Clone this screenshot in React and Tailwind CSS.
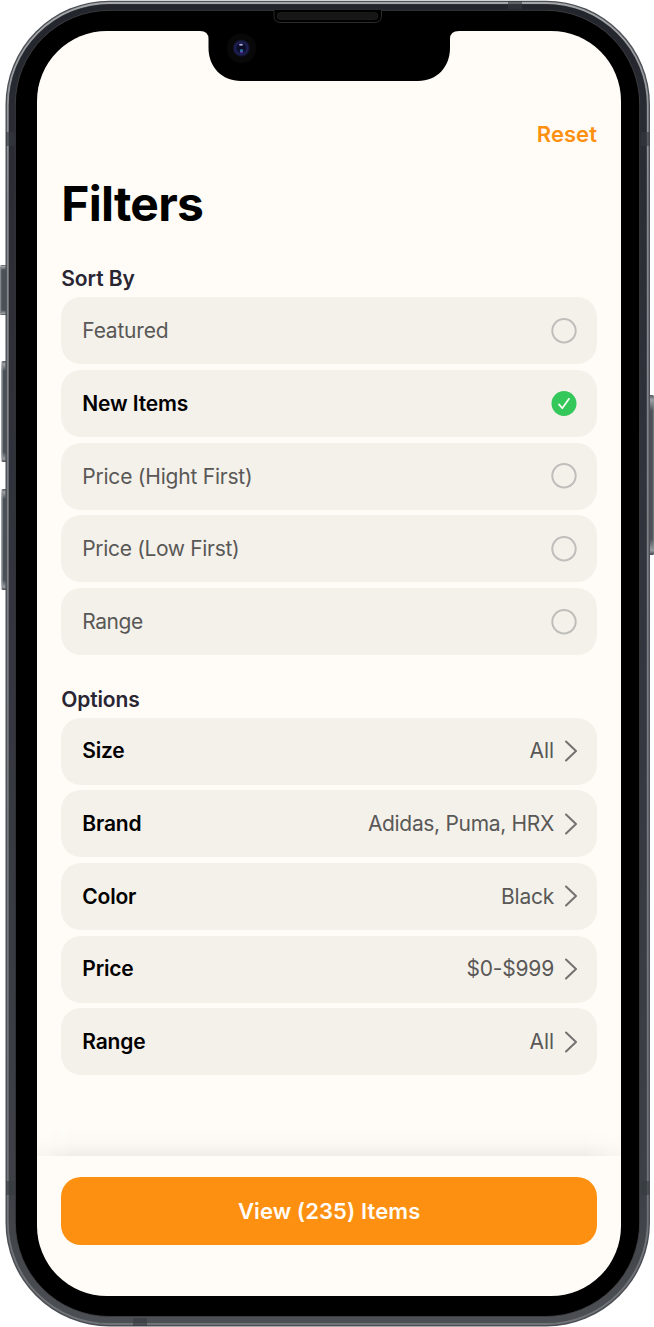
import React from "react";

const sortOptions = [
  { label: "Featured", track: "tracking-[-0.22px]" },
  { label: "New Items", selected: true, track: "tracking-[-0.14px]" },
  { label: "Price (Hight First)", track: "tracking-[-0.22px]" },
  { label: "Price (Low First)", track: "tracking-[-0.34px]" },
  { label: "Range", track: "tracking-[-0.45px]" },
];

const filterOptions = [
  { label: "Size", value: "All", track: "tracking-[-0.1px]" },
  { label: "Brand", value: "Adidas, Puma, HRX", track: "tracking-[-0.32px]" },
  { label: "Color", value: "Black", track: "tracking-[-0.25px]" },
  { label: "Price", value: "$0-$999", track: "tracking-[-0.2px]" },
  { label: "Range", value: "All", track: "tracking-[-0.1px]" },
];

function DeviceFrame() {
  return (
    <svg className="pointer-events-none absolute inset-0" width="654" height="1327" viewBox="0 0 654 1327" fill="none" aria-hidden="true">
      <defs>
        <linearGradient id="shell" x1="0" y1="0" x2="0" y2="1">
          <stop offset="0" stopColor="#22252b" />
          <stop offset="0.1" stopColor="#292c33" />
          <stop offset="0.5" stopColor="#33363e" />
          <stop offset="0.9" stopColor="#3d4147" />
          <stop offset="1" stopColor="#4c5054" />
        </linearGradient>
        <linearGradient id="rim" x1="0" y1="0" x2="0" y2="1">
          <stop offset="0" stopColor="#a4a7a8" />
          <stop offset="0.15" stopColor="#85888d" />
          <stop offset="0.85" stopColor="#6f7378" />
          <stop offset="1" stopColor="#707477" />
        </linearGradient>
        <linearGradient id="key" x1="0" y1="0" x2="0" y2="1">
          <stop offset="0" stopColor="#555a60" />
          <stop offset="0.03" stopColor="#a0a4a8" />
          <stop offset="0.1" stopColor="#4b5157" />
          <stop offset="0.9" stopColor="#4b5157" />
          <stop offset="0.97" stopColor="#999da1" />
          <stop offset="1" stopColor="#44494f" />
        </linearGradient>
        <pattern id="mesh" width="2" height="2" patternUnits="userSpaceOnUse">
          <rect width="2" height="2" fill="#111" />
          <rect width="1" height="1" fill="#1c1c1c" />
          <rect x="1" y="1" width="1" height="1" fill="#1c1c1c" />
        </pattern>
      </defs>
      <rect x="0" y="265" width="8" height="50" rx="1.5" fill="url(#key)" />
      <rect x="1.5" y="361" width="7" height="101" rx="1.5" fill="url(#key)" />
      <rect x="1.5" y="489" width="7" height="101" rx="1.5" fill="url(#key)" />
      <rect x="647" y="395" width="7" height="160" rx="1.5" fill="url(#key)" />
      <g stroke="#8f9499" strokeWidth="1">
        <path d="M0.700 268V312M2.200 364V459M2.200 492V587" />
        <path d="M653.300 398V552" strokeOpacity="0.7" />
      </g>
      <rect x="5.5" y="0.7" width="644.5" height="1325.8" rx="104" fill="#4b4f55" />
      <rect x="7.8" y="3" width="639.9" height="1321" rx="101.700" stroke="url(#rim)" strokeWidth="1.8" />
      <rect x="8.900" y="4.200" width="637.700" height="1318.400" rx="100.500" fill="url(#shell)" />
      <rect x="15.3" y="10.3" width="624.4" height="1306.2" rx="94" fill="#000" stroke="#3f4043" strokeWidth="0.9" />
      <g fill="#353a40" fillOpacity="0.6">
        <rect x="6" y="132" width="8.500" height="14" />
        <rect x="641" y="132" width="8.500" height="14" />
        <rect x="6" y="1181" width="8.500" height="14" />
        <rect x="641" y="1181" width="8.500" height="14" />
        <rect x="508" y="1" width="14" height="8" />
        <rect x="133" y="1318" width="14" height="8" />
      </g>
      <path d="M274 10V16Q274 22.5 281 22.5H374Q381.500 22.5 381.500 16V10" fill="#000" stroke="#2a2a2a" />
      <rect x="277" y="12.5" width="101" height="7" rx="3.5" fill="url(#mesh)" stroke="#202020" strokeWidth="0.7" />
    </svg>
  );
}

function Notch() {
  return (
    <svg className="absolute left-[200px] top-[30px]" width="260" height="52" viewBox="200 30 260 52" aria-hidden="true">
      <defs>
        <radialGradient id="lens">
          <stop offset="0" stopColor="#080a1c" />
          <stop offset="0.45" stopColor="#0c0e2c" />
          <stop offset="0.7" stopColor="#1f2158" />
          <stop offset="1" stopColor="#08080a" />
        </radialGradient>
      </defs>
      <path d="M200 29V31Q208.500 31 208.500 39V48C208.500 67 222 81 241 81H418C437 81 450 67 450 48V39Q450 31 459 31V29Z" fill="#000" />
      <circle cx="241.500" cy="48.300" r="14.800" fill="#080808" />
      <circle cx="241.300" cy="48.200" r="9" fill="url(#lens)" />
      <ellipse cx="241" cy="44.700" rx="2" ry="1" fill="#a9a7d8" />
      <circle cx="241.500" cy="50.800" r="1.700" fill="#326da7" />
      <ellipse cx="241.500" cy="52.500" rx="1.500" ry="0.700" fill="#6523a0" />
    </svg>
  );
}

function Radio({ selected }) {
  return (
    <svg className="h-[26px] w-[27px] shrink-0" viewBox="-1 0 27 26" fill="none" aria-hidden="true">
      {selected ? (
        <>
          <circle cx="13" cy="12.500" r="12.500" fill="#34c759" />
          <path d="M8 13.400L11.300 17.300L18 7.800" stroke="#fffdf8" strokeWidth="1.700" strokeLinecap="round" strokeLinejoin="round" />
        </>
      ) : (
        <circle cx="13" cy="12.800" r="11.700" stroke="#bfbebb" strokeWidth="2" />
      )}
    </svg>
  );
}

function Chevron() {
  return (
    <svg className="ml-[11px] h-[22px] w-3 shrink-0" viewBox="0 0 12 22" fill="none" aria-hidden="true">
      <path d="M1 1.500L11 11L1 20.500" stroke="#737270" strokeWidth="2" strokeLinecap="round" strokeLinejoin="round" />
    </svg>
  );
}

const rowClass = "flex h-[67px] w-full items-center rounded-[20px] bg-[#f4f1eb] pl-[21px] pr-5 text-left";

export default function App() {
  return (
    <div className="relative h-[1327px] w-[654px] overflow-hidden bg-white font-['Inter',sans-serif] text-[21px] leading-[26px] text-black">
      <DeviceFrame />
      <div className="relative pl-[37.300px] pt-[30.700px]">
        <main className="flex h-[1265.300px] w-[583.700px] flex-col overflow-hidden rounded-[70px] bg-[#fffcf7]">
          <div className="flex-1 px-6 pt-[90px]">
            <header>
              <div className="flex justify-end">
                <button className="text-[22px] font-semibold tracking-[0.05px] text-[#fc9010]">Reset</button>
              </div>
              <h1 className="mt-[27px] text-[48px] font-bold leading-[60px] tracking-[-0.75px]">Filters</h1>
            </header>
            <section className="mt-[32.500px]">
              <h2 className="mb-[5.200px] font-semibold tracking-[-0.1px] text-[#292533]">Sort By</h2>
              <div className="flex flex-col gap-[5.700px]">
                {sortOptions.map((o) => (
                  <button key={o.label} className={rowClass}>
                    <span className={"flex-1 pt-[0.500px] " + o.track + (o.selected ? " font-semibold text-black" : " text-[#595856]")}>{o.label}</span>
                    <Radio selected={o.selected} />
                  </button>
                ))}
              </div>
            </section>
            <section className="mt-[31.600px]">
              <h2 className="mb-[4.800px] font-semibold tracking-[-0.15px] text-[#292533]">Options</h2>
              <div className="flex flex-col gap-[5.700px]">
                {filterOptions.map((o) => (
                  <button key={o.label} className={rowClass}>
                    <span className="flex-1 pt-[0.800px] font-semibold tracking-[-0.2px]">{o.label}</span>
                    <span className={"pt-[0.800px] text-[#595856] " + o.track}>{o.value}</span>
                    <Chevron />
                  </button>
                ))}
              </div>
            </section>
          </div>
          <div className="h-7 shrink-0 bg-linear-to-b from-[#fffcf7] via-[#fcf9f4] to-[#f0ede8] mask-[linear-gradient(to_right,rgba(0,0,0,0.35),black_36px,black_calc(100%-36px),rgba(0,0,0,0.35))]" />
          <footer className="h-[139.500px] shrink-0 px-6 pt-[21px]">
            <button className="h-[67.500px] w-full rounded-[20px] bg-[#fd9010] text-[22px] font-semibold tracking-[0.1px] text-[#fffcf7]">View (235) Items</button>
          </footer>
        </main>
      </div>
      <Notch />
    </div>
  );
}
